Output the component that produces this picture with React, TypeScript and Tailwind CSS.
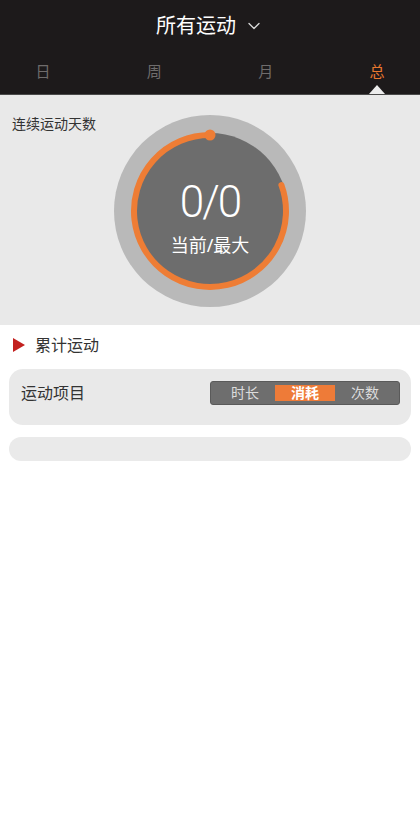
import { ChevronDown } from "lucide-react";

const tabs = ["日", "周", "月", "总"];
const segs = ["时长", "消耗", "次数"];

function StreakRing() {
  // arc from top, counter-clockwise round to the right side
  const cx = 96;
  const cy = 96;
  const r = 76;
  const start = -90;
  const end = -20;
  const rad = (d: number) => (d * Math.PI) / 180;
  const sx = cx + r * Math.cos(rad(start));
  const sy = cy + r * Math.sin(rad(start));
  const ex = cx + r * Math.cos(rad(end));
  const ey = cy + r * Math.sin(rad(end));

  return (
    <div className="relative w-[192px] h-[192px]">
      <svg width="192" height="192" viewBox="0 0 192 192" className="absolute inset-0">
        <circle cx={cx} cy={cy} r="96" fill="#b9b9b9" />
        <circle cx={cx} cy={cy} r="78" fill="#6d6d6d" />
        <path
          d={`M ${sx} ${sy} A ${r} ${r} 0 1 0 ${ex} ${ey}`}
          fill="none"
          stroke="#ee7d35"
          strokeWidth="6"
          strokeLinecap="round"
        />
        <circle cx={sx} cy={sy} r="5.5" fill="#ee7d35" />
      </svg>
      <div className="absolute inset-0 flex flex-col items-center pt-[64px] text-white">
        <div className="text-[44px] leading-[46px] font-light tracking-[-2px] font-['Roboto','Noto_Sans',sans-serif]">0/0</div>
        <div className="text-[18px] leading-none mt-[11px]">当前/最大</div>
      </div>
    </div>
  );
}

export default function App() {
  return (
    <div
      className="w-[420px] min-h-[819px] bg-white"
      style={{ fontFamily: '"Noto Sans", "Noto Sans CJK SC", sans-serif' }}
    >
      {/* header */}
      <div className="bg-[#1d1a1b] border-b border-[#4a4a4a]">
        <div className="h-[52px] flex items-center justify-center gap-[8px] text-white">
          <span className="text-[20px] leading-none">所有运动</span>
          <ChevronDown size={20} strokeWidth={1.6} className="text-[#d8d8d8]" />
        </div>
        <div className="h-[42px] flex items-start justify-between px-[35px] pt-[12px]">
          {tabs.map((t, i) => (
            <div key={t} className="relative w-[16px] flex flex-col items-center">
              <span
                className={
                  "text-[15px] leading-none " + (i === 3 ? "text-[#e9782f]" : "text-[#6f6c6c]")
                }
              >
                {t}
              </span>
              {i === 3 && (
                <div className="absolute top-[21px] w-0 h-0 border-l-[8px] border-r-[8px] border-b-[9px] border-l-transparent border-r-transparent border-b-[#ececec]" />
              )}
            </div>
          ))}
        </div>
      </div>

      {/* streak */}
      <div className="bg-[#e9e9e9] h-[230px] relative">
        <div className="absolute left-[12px] top-[22px] text-[14px] text-[#333] leading-none">连续运动天数</div>
        <div className="flex justify-center pt-[20px]">
          <StreakRing />
        </div>
      </div>

      {/* total */}
      <div className="flex items-center gap-[10px] px-[13px] h-[40px]">
        <div className="w-0 h-0 border-t-[7px] border-b-[7px] border-l-[12px] border-t-transparent border-b-transparent border-l-[#c3211f]" />
        <span className="text-[16px] text-[#333] leading-none">累计运动</span>
      </div>

      <div className="px-[9px] pt-[4px] flex flex-col gap-[12px]">
        <div className="h-[56px] rounded-[14px] bg-[#e9e9e9] flex items-start justify-between pl-[12px] pr-[11px] pt-[12px]">
          <span className="text-[16px] leading-[24px] text-[#333]">运动项目</span>
          <div className="w-[190px] h-[24px] rounded-[3px] bg-[#6e6e6e] border border-[#5a5a5a] flex items-center px-[4px]">
            {segs.map((s, i) => (
              <div
                key={s}
                className={
                  "flex-1 h-[16px] flex items-center justify-center text-[14px] leading-none " +
                  (i === 1 ? "bg-[#ee7b38] text-white font-bold" : "text-[#dcdcdc]")
                }
              >
                {s}
              </div>
            ))}
          </div>
        </div>
        <div className="h-[24px] rounded-[12px] bg-[#eaeaea]" />
      </div>
    </div>
  );
}
